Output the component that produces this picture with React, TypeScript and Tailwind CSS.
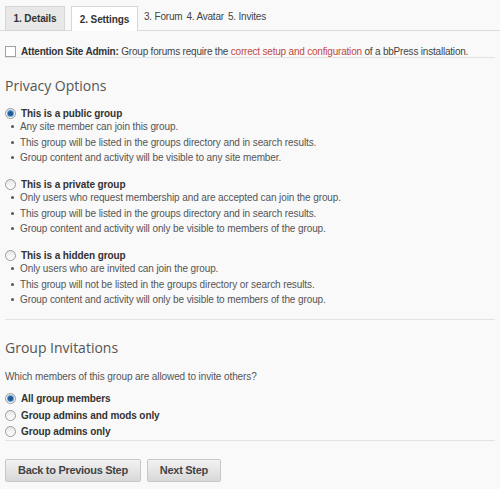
const bodyFont = { fontFamily: '"Liberation Sans", Arial, sans-serif' }
const headFont = { fontFamily: '"Open Sans", "Liberation Sans", sans-serif' }

function Radio({ checked }: { checked?: boolean }) {
  return (
    <span className="inline-flex h-[11px] w-[11px] shrink-0 items-center justify-center rounded-full border border-[#9a9a9a] bg-gradient-to-b from-[#e6e6e6] to-white">
      {checked && <span className="h-[5px] w-[5px] rounded-full bg-[#1f5a9e] ring-1 ring-[#6aa2d8]" />}
    </span>
  )
}

function Option({ label, checked, bullets }: { label: string; checked?: boolean; bullets: string[] }) {
  return (
    <div>
      <label className="flex h-[12px] items-center gap-[5px] font-bold text-[#333]">
        <Radio checked={checked} />
        <span>{label}</span>
      </label>
      <ul>
        {bullets.map((b, i) => (
          <li key={i} className="flex h-[15.5px] items-center pl-[6px] text-[#555]">
            <span className="mr-[6px] h-[3px] w-[3px] rounded-full bg-[#555]" />
            {b}
          </li>
        ))}
      </ul>
    </div>
  )
}

export default function App() {
  return (
    <div className="min-h-[489px] w-[500px] bg-[#f9f9f9] text-[10px] tracking-[-0.1px] text-[#555]" style={bodyFont}>
      <div className="flex items-end gap-[6px] border-b border-[#dcdcdc] px-[5px] pt-[6px]">
        <div className="mb-[-1px] flex h-[25px] w-[60px] items-center justify-center border border-[#d6d6d6] bg-[#e8e8e8] font-bold text-[#333]">
          1. Details
        </div>
        <div className="mb-[-1px] flex h-[25px] w-[67px] items-center justify-center border border-b-0 border-[#d6d6d6] bg-white font-bold text-[#333]">
          2. Settings
        </div>
        <div className="flex gap-[4px] self-start pt-[3px] tracking-[-0.2px] text-[#444]">
          <span>3. Forum</span>
          <span>4. Avatar</span>
          <span>5. Invites</span>
        </div>
      </div>

      <div className="mx-[5px] mt-[14px] box-content flex h-[12px] items-center gap-[5px] border-b border-[#e2e2e2]">
        <span className="h-[11px] w-[11px] border border-[#a0a0a0] bg-white" />
        <p className="tracking-[-0.2px] text-[#444]">
          <b className="text-[#333]">Attention Site Admin:</b> Group forums require the{' '}
          <a className="text-[#c24a3e]">correct setup and configuration</a> of a bbPress installation.
        </p>
      </div>

      <h2 className="mx-[5px] mt-[18px] text-[14px] leading-[20px] tracking-normal text-[#555]" style={headFont}>
        Privacy Options
      </h2>

      <div className="mx-[5px] mt-[11px] flex flex-col gap-[12.5px]">
        <Option
          checked
          label="This is a public group"
          bullets={[
            'Any site member can join this group.',
            'This group will be listed in the groups directory and in search results.',
            'Group content and activity will be visible to any site member.',
          ]}
        />
        <Option
          label="This is a private group"
          bullets={[
            'Only users who request membership and are accepted can join the group.',
            'This group will be listed in the groups directory and in search results.',
            'Group content and activity will only be visible to members of the group.',
          ]}
        />
        <Option
          label="This is a hidden group"
          bullets={[
            'Only users who are invited can join the group.',
            'This group will not be listed in the groups directory or search results.',
            'Group content and activity will only be visible to members of the group.',
          ]}
        />
      </div>

      <div className="mx-[5px] mt-[11px] border-b border-[#e2e2e2]" />

      <h2 className="mx-[5px] mt-[18px] text-[14px] leading-[20px] tracking-normal text-[#555]" style={headFont}>
        Group Invitations
      </h2>
      <p className="mx-[5px] mt-[12px] leading-[13px] text-[#555]">
        Which members of this group are allowed to invite others?
      </p>

      <div className="mx-[5px] mt-[8px] flex flex-col border-b border-[#e2e2e2]">
        {[
          ['All group members', true],
          ['Group admins and mods only', false],
          ['Group admins only', false],
        ].map(([l, c]) => (
          <label key={l as string} className="flex h-[16.5px] items-center gap-[5px] font-bold text-[#333]">
            <Radio checked={c as boolean} />
            <span>{l as string}</span>
          </label>
        ))}
      </div>

      <div className="mx-[5px] mt-[18px] flex gap-[6px]">
        {['Back to Previous Step', 'Next Step'].map((t) => (
          <button
            key={t}
            className="h-[23px] rounded-[2px] border border-[#c8c8c8] bg-gradient-to-b from-[#f2f2f2] to-[#d8d8d8] px-[12px] text-[11px] font-bold tracking-[-0.3px] text-[#444]"
            style={bodyFont}
          >
            {t}
          </button>
        ))}
      </div>
    </div>
  )
}
